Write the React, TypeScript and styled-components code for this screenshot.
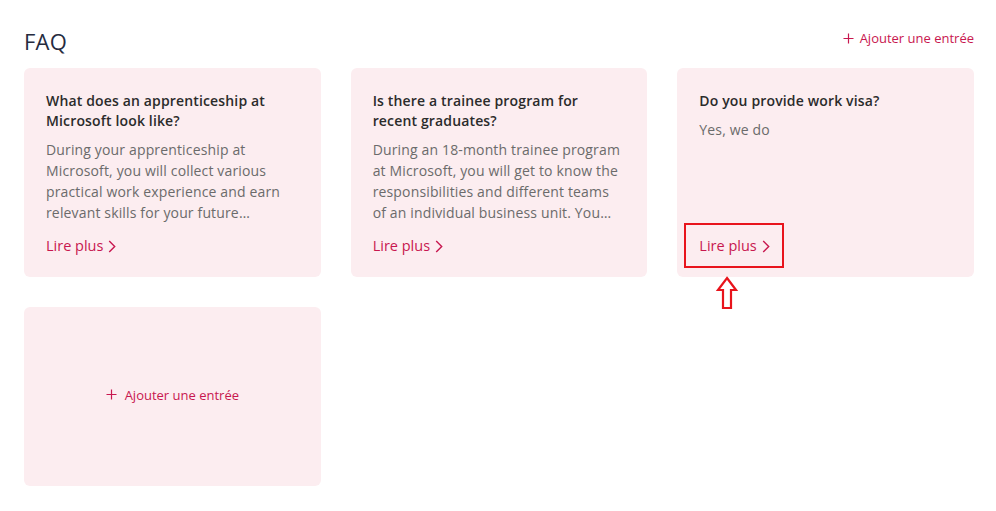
import React from 'react';
import styled, { createGlobalStyle } from 'styled-components';

const ACCENT = '#c8174f';

const GlobalStyle = createGlobalStyle`
  html, body {
    margin: 0;
    padding: 0;
    background: #ffffff;
    font-family: 'Open Sans', 'Noto Sans', sans-serif;
  }
`;

const Page = styled.div`
  padding: 22px 22px 24px 24px;
  box-sizing: border-box;
  width: 996px;
  height: 511px;
`;

const Header = styled.div`
  display: flex;
  align-items: center;
  justify-content: space-between;
  height: 38px;
  margin-bottom: 8px;
`;

const Title = styled.h2`
  margin: 0;
  font-size: 22px;
  font-weight: 400;
  color: #262b3f;
  letter-spacing: 0.2px;
`;

const AddLink = styled.a<{ $inCard?: boolean }>`
  display: inline-flex;
  align-items: center;
  gap: ${(p) => (p.$inCard ? '8px' : '6px')};
  font-size: 13px;
  color: ${ACCENT};
  cursor: pointer;
  text-decoration: none;
  margin-top: ${(p) => (p.$inCard ? '-4px' : '-6px')};
`;

const Grid = styled.div`
  display: grid;
  grid-template-columns: repeat(3, 1fr);
  column-gap: 30px;
  row-gap: 30px;
`;

const Card = styled.div`
  position: relative;
  display: flex;
  flex-direction: column;
  background: #fcedf0;
  border-radius: 6px;
  padding: 23px 22px 21px 22px;
  box-sizing: border-box;
`;

const AddCard = styled(Card)`
  height: 179px;
  align-items: center;
  justify-content: center;
  padding: 0;
`;

const Question = styled.div`
  font-size: 14px;
  font-weight: 600;
  line-height: 20px;
  letter-spacing: 0.15px;
  color: #2b2b2b;
  margin-bottom: 8px;
`;

const Answer = styled.div`
  font-size: 14px;
  line-height: 21px;
  letter-spacing: 0.15px;
  color: #6b6b6b;
  display: -webkit-box;
  -webkit-line-clamp: 4;
  -webkit-box-orient: vertical;
  overflow: hidden;
`;

const ReadMore = styled.a`
  display: inline-flex;
  align-items: center;
  gap: 5px;
  margin-top: auto;
  padding-top: 13px;
  font-size: 14.5px;
  line-height: 20px;
  color: ${ACCENT};
  cursor: pointer;
`;

const Highlight = styled.div`
  position: absolute;
  left: 7px;
  top: 155px;
  width: 100px;
  height: 45px;
  border: 2px solid #e8141c;
  box-sizing: border-box;
  pointer-events: none;
`;

const Arrow = styled.svg`
  position: absolute;
  left: 38px;
  top: 208px;
  pointer-events: none;
`;

const PlusIcon = () => (
  <svg width="11" height="11" viewBox="0 0 11 11">
    <path d="M5.5 0.5v10M0.5 5.5h10" stroke={ACCENT} strokeWidth="1.2" fill="none" />
  </svg>
);

const Chevron = () => (
  <svg width="8" height="13" viewBox="0 0 8 13">
    <path d="M1.2 1l5.5 5.5-5.5 5.5" stroke={ACCENT} strokeWidth="1.4" fill="none" />
  </svg>
);

interface IFaqItem {
  question: string;
  answer: string;
}

const ITEMS: IFaqItem[] = [
  {
    question: 'What does an apprenticeship at Microsoft look like?',
    answer:
      'During your apprenticeship at Microsoft, you will collect various practical work experience and earn relevant skills for your future…',
  },
  {
    question: 'Is there a trainee program for recent graduates?',
    answer:
      'During an 18-month trainee program at Microsoft, you will get to know the responsibilities and different teams of an individual business unit. You…',
  },
  {
    question: 'Do you provide work visa?',
    answer: 'Yes, we do',
  },
];

export default function App() {
  return (
    <Page>
      <GlobalStyle />
      <Header>
        <Title>FAQ</Title>
        <AddLink>
          <PlusIcon />
          Ajouter une entrée
        </AddLink>
      </Header>
      <Grid>
        {ITEMS.map((item, inx) => (
          <Card key={item.question}>
            <Question>{item.question}</Question>
            <Answer>{item.answer}</Answer>
            <ReadMore>
              Lire plus
              <Chevron />
            </ReadMore>
            {inx === 2 && (
              <>
                <Highlight />
                <Arrow width="24" height="34" viewBox="0 0 24 34">
                  <path
                    d="M12 2 L21 14 L16 14 L16 32 L8 32 L8 14 L3 14 Z"
                    fill="none"
                    stroke="#e8141c"
                    strokeWidth="2.2"
                    strokeLinejoin="miter"
                  />
                </Arrow>
              </>
            )}
          </Card>
        ))}
        <AddCard>
          <AddLink $inCard>
            <PlusIcon />
            Ajouter une entrée
          </AddLink>
        </AddCard>
      </Grid>
    </Page>
  );
}
